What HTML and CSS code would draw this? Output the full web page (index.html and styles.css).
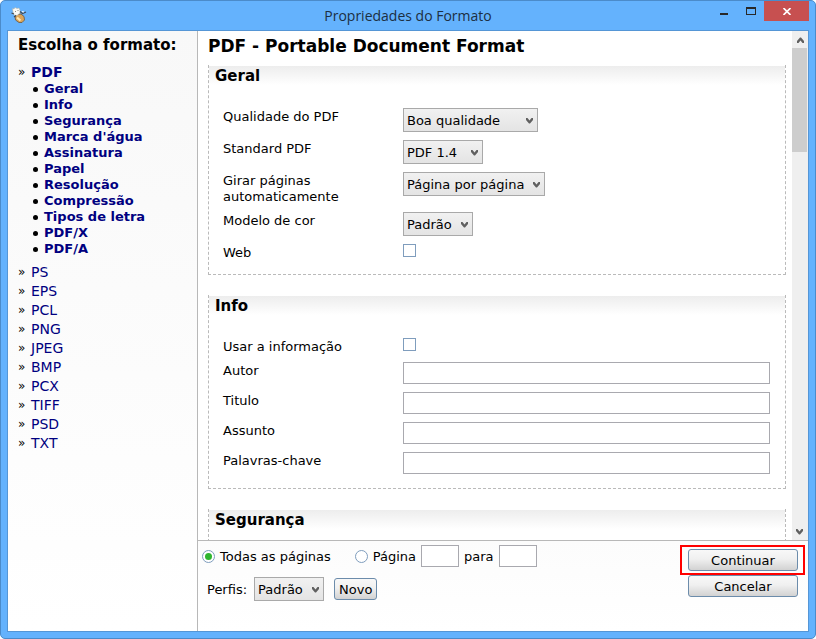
FILE: index.html
```html
<!DOCTYPE html>
<html lang="pt">
<head>
<meta charset="utf-8">
<title>Propriedades do Formato</title>
<link rel="stylesheet" href="styles.css">
</head>
<body>
<svg class="defs" aria-hidden="true">
  <symbol id="chevron" viewBox="0 0 8 7"><path d="M0 1 L1.500 1 L3.500 3.500 L5.500 1 L7 1 L7 3 L4 6.500 L3 6.500 L0 3 Z" fill="#606060"/></symbol>
</svg>
<div class="window">
  <header class="titlebar">
    <svg class="app-icon" viewBox="0 0 16 17" aria-hidden="true">
      <path d="M4 9 L6 7.500 L10 7 L13 9.500 L13.500 13 L11 15.500 L8 15.500 L4.500 13 Z" fill="#dba55a" stroke="#6f5537" stroke-width=".8"/>
      <path d="M6 10.500 L9.500 13.500" stroke="#ffe6b0" stroke-width="2.200"/>
      <path d="M1.500 1.500 L3 2 L4 0.500 L6 1.500 L8 1 L9 3.500 L9 6 L6 8.500 L3 8 L2 5 Z" fill="#fafaf6" stroke="#b4b0a0" stroke-width=".5"/>
      <path d="M0.500 6 L3 7 M9 4.500 L11.500 6.500 L15 5 M3 10 L5 8.500" stroke="#454a50" stroke-width="1.200" fill="none"/>
      <path d="M4 4 L5 5 M7 3 V4" stroke="#8c8a80" fill="none"/>
      <path d="M11 4.500 L13 5" stroke="#fff"/>
    </svg>
    <h1 class="window-title">Propriedades do Formato</h1>
    <div class="window-buttons">
      <button class="win-btn" type="button" aria-label="Minimizar"><svg width="10" height="10" viewBox="0 0 10 10"><path d="M1 7h8v2h-8z" fill="#282828"/></svg></button>
      <button class="win-btn" type="button" aria-label="Maximizar"><svg width="10" height="8" viewBox="0 0 10 8"><path d="M0 0h10v8H0z M1 2v5h8V2z" fill="#282828" fill-rule="evenodd"/></svg></button>
      <button class="win-btn close" type="button" aria-label="Fechar"><svg width="8" height="7" viewBox="0 0 8 7"><path d="M0.500 0 L7.500 7 M7.500 0 L0.500 7" stroke="#fff" stroke-width="1.600"/></svg></button>
    </div>
  </header>
  <div class="client">
    <nav class="sidebar">
      <h2>Escolha o formato:</h2>
      <ul class="formats">
        <li class="current"><a href="#pdf">PDF</a>
          <ul class="topics">
            <li><a href="#geral">Geral</a></li>
            <li><a href="#info">Info</a></li>
            <li><a href="#seguranca">Segurança</a></li>
            <li><a href="#marca">Marca d'água</a></li>
            <li><a href="#assinatura">Assinatura</a></li>
            <li><a href="#papel">Papel</a></li>
            <li><a href="#resolucao">Resolução</a></li>
            <li><a href="#compressao">Compressão</a></li>
            <li><a href="#tipos">Tipos de letra</a></li>
            <li><a href="#pdfx">PDF/X</a></li>
            <li><a href="#pdfa">PDF/A</a></li>
          </ul>
        </li>
        <li><a href="#ps">PS</a></li>
        <li><a href="#eps">EPS</a></li>
        <li><a href="#pcl">PCL</a></li>
        <li><a href="#png">PNG</a></li>
        <li><a href="#jpeg">JPEG</a></li>
        <li><a href="#bmp">BMP</a></li>
        <li><a href="#pcx">PCX</a></li>
        <li><a href="#tiff">TIFF</a></li>
        <li><a href="#psd">PSD</a></li>
        <li><a href="#txt">TXT</a></li>
      </ul>
    </nav>
    <form class="main">
      <div class="scroller">
        <div class="content">
          <h2 id="pdf">PDF - Portable Document Format</h2>
          <section class="group">
            <h3 id="geral">Geral</h3>
            <div class="fields">
              <label for="quality">Qualidade do PDF</label>
              <span class="select wide"><select id="quality"><option>Boa qualidade</option></select><svg><use href="#chevron"/></svg></span>
              <label for="standard">Standard PDF</label>
              <span class="select short"><select id="standard"><option>PDF 1.4</option></select><svg><use href="#chevron"/></svg></span>
              <label for="rotate">Girar páginas automaticamente</label>
              <span class="select wider"><select id="rotate"><option>Página por página</option></select><svg><use href="#chevron"/></svg></span>
              <label for="color">Modelo de cor</label>
              <span class="select shorter"><select id="color"><option>Padrão</option></select><svg><use href="#chevron"/></svg></span>
              <label for="web">Web</label>
              <input id="web" type="checkbox">
            </div>
          </section>
          <section class="group">
            <h3 id="info">Info</h3>
            <div class="fields">
              <label for="useinfo">Usar a informação</label>
              <input id="useinfo" type="checkbox">
              <label for="author">Autor</label>
              <input id="author" type="text">
              <label for="title">Titulo</label>
              <input id="title" type="text">
              <label for="subject">Assunto</label>
              <input id="subject" type="text">
              <label for="keywords">Palavras-chave</label>
              <input id="keywords" type="text">
            </div>
          </section>
          <section class="group">
            <h3 id="seguranca">Segurança</h3>
            <div class="fields"></div>
          </section>
        </div>
        <div class="scrollbar" aria-hidden="true">
          <svg class="up"><use href="#chevron"/></svg>
          <div class="thumb"></div>
          <svg><use href="#chevron"/></svg>
        </div>
      </div>
      <footer class="footer">
        <div class="options">
          <div class="pages">
            <input id="all" type="radio" name="pages" checked>
            <label class="all" for="all">Todas as páginas</label>
            <input id="range" type="radio" name="pages">
            <label for="range">Página</label>
            <input class="number" type="text" aria-label="Página inicial">
            <label for="last">para</label>
            <input id="last" class="number" type="text">
          </div>
          <div class="profiles">
            <label for="profile">Perfis:</label>
            <span class="select shorter"><select id="profile"><option>Padrão</option></select><svg><use href="#chevron"/></svg></span>
            <button class="button" type="button">Novo</button>
          </div>
        </div>
        <div class="actions">
          <button class="button highlighted" type="button">Continuar</button>
          <button class="button" type="button">Cancelar</button>
        </div>
      </footer>
    </form>
  </div>
</div>
</body>
</html>
```
FILE: styles.css
```css
* { box-sizing: border-box; }

body {
  margin: 0;
  background: #fff;
  color: #000;
  font: 13px/16px Verdana, "DejaVu Sans", sans-serif;
}

h1, h2, h3, ul { margin: 0; padding: 0; }
ul { list-style: none; }
a { color: #000080; text-decoration: none; }
input, select, button { margin: 0; font: inherit; color: inherit; border-radius: 0; }
.defs { position: absolute; width: 0; height: 0; }

.window {
  display: flex;
  flex-direction: column;
  height: 100vh;
  padding: 0 6px 6px;
  background: #64b2fd;
  border: 1px solid #4b8bca;
  border-radius: 5px;
}

/* Title bar */
.titlebar {
  display: grid;
  grid-template-columns: 1fr auto 1fr;
  flex: none;
  height: 29px;
}
.app-icon { width: 16px; height: 17px; margin: 6px 0 0 4px; }
.window-title {
  color: #1c2f42;
  font: 14px/29px "Segoe UI", "Open Sans", sans-serif;
}
.window-buttons { display: flex; justify-content: flex-end; }
.win-btn {
  display: grid;
  place-items: center;
  width: 27px;
  height: 20px;
  padding: 0;
  background: none;
  border: 0;
}
.close { width: 45px; background: #c75050; }

/* Client area */
.client {
  display: flex;
  flex: 1;
  min-height: 0;
  background: #fff;
  border: 1px solid #5596d6;
}
.sidebar {
  flex: none;
  width: 190px;
  padding: 5px 0 0 10px;
  background: linear-gradient(#f8f8f8, #fff);
  border-right: 1px solid #b8b8b8;
}
.sidebar h2 { font-size: 15px; line-height: 18px; }
.formats { padding-top: 9px; font-size: 14px; line-height: 19px; }
.formats > li {
  display: grid;
  grid-template-columns: 13px 1fr;
}
.formats > li::before {
  content: "»";
  font-size: 12px;
  font-weight: normal;
}
.current { font-weight: bold; }
.topics {
  grid-column: 1 / -1;
  margin-top: -1px;
  padding-bottom: 6px;
  font-size: 13px;
  line-height: 16px;
}
.topics li { display: flex; align-items: center; }
.topics li::before {
  content: "";
  width: 5px;
  height: 5px;
  margin: 0 6px 0 15px;
  background: #000;
  border-radius: 50%;
}

.main { display: flex; flex: 1; flex-direction: column; min-width: 0; }
.scroller { display: flex; flex: 1; min-height: 0; overflow: hidden; }
.content { flex: 1; padding: 5px 6px 0 10px; }
.content h2 { font-size: 17px; line-height: 20px; margin-bottom: 9px; }

.group {
  margin-bottom: 20px;
  padding: 1px 15px 14px 14px;
  border: 1px dashed #bababa;
  border-top: 0;
  background: linear-gradient(#ededed, #fff) 0 1px / 100% 19px no-repeat;
}
.group h3 { margin: 0 0 22px -8px; font-size: 15px; line-height: 20px; }
.fields {
  display: grid;
  grid-template-columns: 140px 1fr;
  grid-auto-rows: minmax(16px, auto);
  column-gap: 40px;
  row-gap: 8px;
  align-items: start;
}
.fields:empty { height: 60px; }
.fields label { margin: 1px 0 -1px; }

/* Controls */
.select { display: inline-grid; align-items: center; position: relative; height: 24px; }
.select select {
  appearance: none;
  width: 100%;
  height: 24px;
  padding: 2px 3px 0;
  background: linear-gradient(#f1f1f1, #e4e4e4);
  border: 1px solid #a9a9a9;
}
.select svg {
  position: absolute;
  right: 4px;
  width: 8px;
  height: 7px;
  pointer-events: none;
}
.wide { width: 135px; }
.wider { width: 142px; }
.short { width: 80px; }
.shorter { width: 70px; }

input[type="text"] { width: 100%; height: 22px; background: #fff; border: 1px solid #a9a9af; }
input[type="checkbox"] {
  appearance: none;
  width: 13px;
  height: 13px;
  background: #fff;
  border: 1px solid #7f9dbd;
}
input[type="radio"] {
  appearance: none;
  display: grid;
  place-items: center;
  flex: none;
  width: 13px;
  height: 13px;
  background: #fff;
  border: 1px solid #7f9dbd;
  border-radius: 50%;
}
input[type="radio"]:checked::before {
  content: "";
  width: 7px;
  height: 7px;
  background: #2fb62f;
  border-radius: 50%;
}
.button {
  height: 22px;
  padding: 1px 4px 0;
  background: linear-gradient(#f8f8f8, #f0f0f0 45%, #d2d2d2);
  border: 1px solid #6c8cab;
  border-radius: 3px;
  line-height: 20px;
}

/* Scroll bar */
.scrollbar {
  display: flex;
  flex: none;
  flex-direction: column;
  align-items: center;
  width: 16px;
  padding: 6px 0 5px;
  background: #efefef;
}
.scrollbar svg { width: 8px; height: 7px; margin-top: auto; }
.scrollbar .up { margin: 0 0 4px; transform: rotate(180deg); }
.thumb { align-self: stretch; height: 104px; margin-right: 1px; background: #cdcdcd; }

/* Footer */
.footer {
  display: flex;
  flex: none;
  justify-content: space-between;
  height: 91px;
  padding: 4px 10px 0 4px;
  border-top: 1px solid #b8b8b8;
  background: linear-gradient(#fcfcfc, #fff);
}
.footer label { padding-top: 2px; }
.pages { display: flex; align-items: center; gap: 5px; height: 22px; }
.all { margin-right: 19px; }
.pages .number { width: 38px; }
.profiles { display: flex; align-items: center; gap: 7px; padding: 10px 0 0 5px; }
.profiles .button { margin-left: 3px; }
.actions { display: flex; flex-direction: column; gap: 4px; padding-top: 4px; }
.actions .button { width: 110px; }
.highlighted { position: relative; }
.highlighted::after {
  content: "";
  position: absolute;
  inset: -5px -8px -5px -9px;
  border: 2px solid #f00;
}
```
